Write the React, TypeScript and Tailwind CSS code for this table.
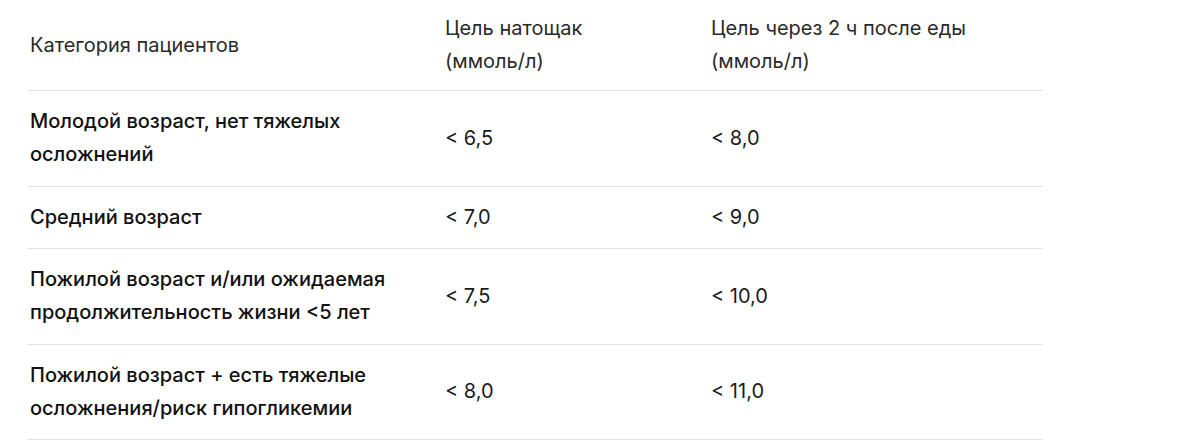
import React from 'react';

interface Row {
  category: string[];
  fasting: string;
  afterMeal: string;
}

const rows: Row[] = [
  { category: ['Молодой возраст, нет тяжелых', 'осложнений'], fasting: '< 6,5', afterMeal: '< 8,0' },
  { category: ['Средний возраст'], fasting: '< 7,0', afterMeal: '< 9,0' },
  {
    category: ['Пожилой возраст и/или ожидаемая', 'продолжительность жизни <5 лет'],
    fasting: '< 7,5',
    afterMeal: '< 10,0',
  },
  {
    category: ['Пожилой возраст + есть тяжелые', 'осложнения/риск гипогликемии'],
    fasting: '< 8,0',
    afterMeal: '< 11,0',
  },
];

export default function App() {
  return (
    <div className="w-[1200px] h-[440px] bg-white overflow-hidden font-['Inter',sans-serif] text-[20px] leading-[33px]">
      <table className="ml-[28px] w-[1015px] border-collapse table-fixed">
        <colgroup>
          <col className="w-[417px]" />
          <col className="w-[266px]" />
          <col />
        </colgroup>
        <thead>
          <tr className="border-b border-[#e3e3e3] text-[#2a2a2a]">
            <th className="pl-[2px] pt-[12px] pb-[12px] text-left font-normal align-middle">Категория пациентов</th>
            <th className="pt-[12px] pb-[12px] text-left font-normal align-middle">
              Цель натощак
              <br />
              (ммоль/л)
            </th>
            <th className="pt-[12px] pb-[12px] text-left font-normal align-middle">
              Цель через 2 ч после еды
              <br />
              (ммоль/л)
            </th>
          </tr>
        </thead>
        <tbody className="leading-[33px]">
          {rows.map((row) => (
            <tr key={row.category[0]} className="border-b border-[#e3e3e3]">
              <td className="pl-[2px] pt-[14px] pb-[14.5px] align-middle font-medium text-[#111]">
                {row.category.map((line, i) => (
                  <div key={i}>{line}</div>
                ))}
              </td>
              <td className="pt-[14px] pb-[14.5px] align-middle text-[#1a1a1a]">{row.fasting}</td>
              <td className="pt-[14px] pb-[14.5px] align-middle text-[#1a1a1a]">{row.afterMeal}</td>
            </tr>
          ))}
        </tbody>
      </table>
    </div>
  );
}
